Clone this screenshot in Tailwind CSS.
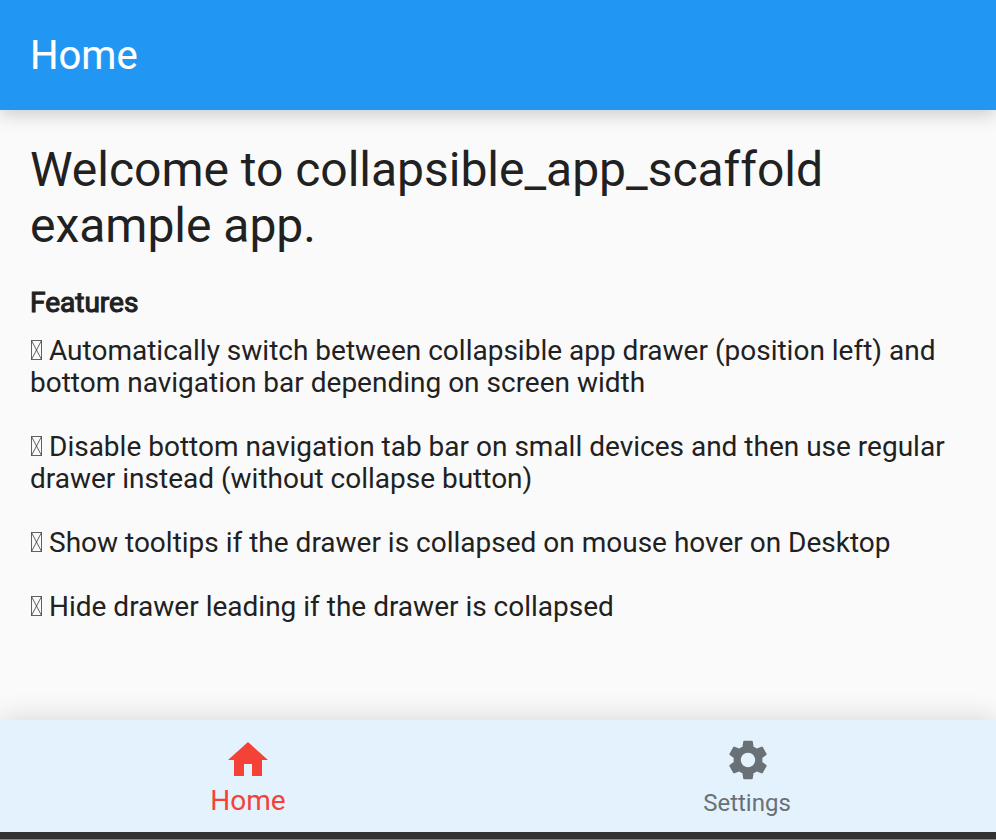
<!DOCTYPE html>
<html lang="en"><head><meta charset="utf-8"><title>Home</title>
<script src="https://cdn.jsdelivr.net/npm/@tailwindcss/browser@4"></script></head>
<body class="font-[Roboto,sans-serif]">
<div class="flex h-[840px] w-[996px] flex-col overflow-hidden bg-[#fafafa] text-[#212121]">
<header class="z-10 flex h-[110px] shrink-0 items-center bg-[#2196f3] px-[30px] pt-[2px] text-[40px] text-white shadow-[0_4px_18px_rgba(0,0,0,0.2)]"><h1 class="font-normal [-webkit-text-stroke:0.15px_currentColor]">Home</h1></header>
<main class="flex-1 px-[30px] pt-[32px]">
<h2 class="text-[48px] leading-[56px] tracking-[-0.02px] whitespace-nowrap">Welcome to collapsible_app_scaffold<br>example app.</h2>
<h3 class="mt-[33px] text-[28px] leading-[32px] font-normal [-webkit-text-stroke:1.1px_currentColor]">Features</h3>
<div class="mt-[16px] flex flex-col gap-[32px] text-[28px] leading-[32px] whitespace-nowrap">
<p><svg class="mr-[7px] inline-block h-[20px] w-[12px] align-baseline" viewBox="0 0 12 20" fill="none" stroke="#212121" stroke-opacity=".7" stroke-width="1"><path d="M1.5.5h10v19h-10zL11.5 19.5M11.5.5 1.5 19.5"/></svg>Automatically switch between collapsible app drawer (position left) and<br>bottom navigation bar depending on screen width</p>
<p><svg class="mr-[7px] inline-block h-[20px] w-[12px] align-baseline" viewBox="0 0 12 20" fill="none" stroke="#212121" stroke-opacity=".7" stroke-width="1"><path d="M1.5.5h10v19h-10zL11.5 19.5M11.5.5 1.5 19.5"/></svg>Disable bottom navigation tab bar on small devices and then use regular<br>drawer instead (without collapse button)</p>
<p><svg class="mr-[7px] inline-block h-[20px] w-[12px] align-baseline" viewBox="0 0 12 20" fill="none" stroke="#212121" stroke-opacity=".7" stroke-width="1"><path d="M1.5.5h10v19h-10zL11.5 19.5M11.5.5 1.5 19.5"/></svg>Show tooltips if the drawer is collapsed on mouse hover on Desktop</p>
<p><svg class="mr-[7px] inline-block h-[20px] w-[12px] align-baseline" viewBox="0 0 12 20" fill="none" stroke="#212121" stroke-opacity=".7" stroke-width="1"><path d="M1.5.5h10v19h-10zL11.5 19.5M11.5.5 1.5 19.5"/></svg>Hide drawer leading if the drawer is collapsed</p>
</div></main>
<nav class="z-10 flex h-[112px] shrink-0 bg-[#e3f2fd] shadow-[0_-4px_24px_rgba(0,0,0,0.12)]">
<div class="flex w-[496px] flex-col items-center pt-[16px] text-[28px] leading-[32px] text-[#f44336]"><svg class="h-[48px] w-[48px]" viewBox="0 0 24 24" fill="currentColor"><path d="M10 20v-6h4v6h5v-8h3L12 3 2 12h3v8z"/></svg><span class="mt-[1px]">Home</span></div>
<div class="flex flex-1 flex-col items-center pt-[16px] pl-[4px] text-[24px] leading-[32px] text-[#697177]"><svg class="h-[48px] w-[48px]" viewBox="0 0 24 24" fill="currentColor"><path d="M19.14 12.94c.04-.3.06-.61.06-.94 0-.32-.02-.64-.07-.94l2.03-1.58a.49.49 0 0 0 .12-.61l-1.92-3.32a.488.488 0 0 0-.59-.22l-2.39.96c-.5-.38-1.03-.7-1.62-.94l-.36-2.54a.484.484 0 0 0-.48-.41h-3.84c-.24 0-.43.17-.47.41l-.36 2.54c-.59.24-1.13.57-1.62.94l-2.39-.96c-.22-.08-.47 0-.59.22L2.74 8.87c-.12.21-.08.47.12.61l2.03 1.58c-.05.3-.09.63-.09.94s.02.64.07.94l-2.03 1.58a.49.49 0 0 0-.12.61l1.92 3.32c.12.22.37.29.59.22l2.39-.96c.5.38 1.03.7 1.62.94l.36 2.54c.05.24.24.41.48.41h3.84c.24 0 .44-.17.47-.41l.36-2.54c.59-.24 1.13-.56 1.62-.94l2.39.96c.22.08.47 0 .59-.22l1.92-3.32c.12-.22.07-.47-.12-.61l-2.01-1.58zM12 15.6c-1.98 0-3.6-1.62-3.6-3.6s1.62-3.6 3.6-3.6 3.6 1.62 3.6 3.6-1.62 3.6-3.6 3.6z"/></svg><span class="mt-[3px] mr-[2px]">Settings</span></div>
</nav>
<div class="z-20 h-[8px] shrink-0 border-b border-[#888] bg-[#323232]"></div>
</div></body></html>
